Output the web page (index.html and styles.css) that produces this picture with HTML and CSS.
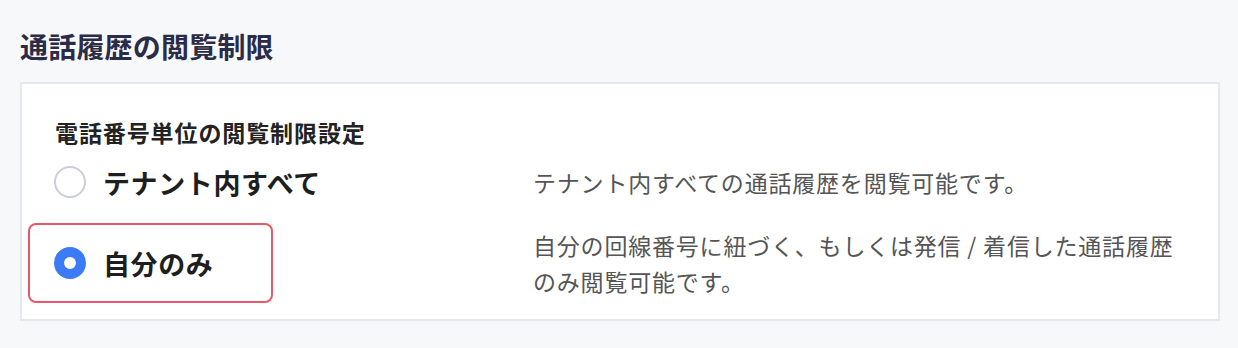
FILE: index.html
```html
<!DOCTYPE html>
<html lang="ja">
<head>
    <meta charset="UTF-8">
    <meta name="viewport" content="width=device-width, initial-scale=1.0">
    <title>通話履歴の閲覧制限</title>
    <link rel="stylesheet" href="styles.css">
</head>
<body>
    <div class="container">
        <h2 class="section-title">通話履歴の閲覧制限</h2>

        <div class="panel">
            <h3 class="panel-title">電話番号単位の閲覧制限設定</h3>

            <div class="options">
                <div class="option-row">
                    <label class="option">
                        <span class="radio"></span>
                        <span class="option-label">テナント内すべて</span>
                    </label>
                    <p class="option-desc">テナント内すべての通話履歴を閲覧可能です。</p>
                </div>
                <div class="option-row">
                    <label class="option selected">
                        <span class="radio checked"></span>
                        <span class="option-label">自分のみ</span>
                    </label>
                    <p class="option-desc">自分の回線番号に紐づく、もしくは発信 / 着信した通話履歴のみ閲覧可能です。</p>
                </div>
            </div>
        </div>
    </div>
</body>
</html>
```

FILE: styles.css
```css
body {
    margin: 0;
    padding: 0;
    background-color: #f7f8fa;
    font-family: "Noto Sans CJK JP", "Noto Sans", sans-serif;
}

.container {
    padding: 0 18px 0 20px;
}

.section-title {
    margin: 0;
    padding-top: 28px;
    height: 54px;
    font-size: 28px;
    line-height: 36px;
    letter-spacing: 0.2px;
    font-weight: 700;
    color: #2b2c47;
}

.panel {
    background-color: #fff;
    border: 2px solid #e6e8ec;
    padding: 38px 6px 16px;
}

.panel-title {
    margin: 0 0 0 27px;
    font-size: 23px;
    line-height: 20px;
    letter-spacing: 0.9px;
    font-weight: 700;
    color: #222;
}

.options {
    display: flex;
    flex-direction: column;
    gap: 1px;
}

.option-row {
    display: flex;
    align-items: center;
    height: 80px;
}

.option {
    box-sizing: border-box;
    flex: 0 0 245px;
    min-width: 0;
    height: 80px;
    display: flex;
    align-items: center;
    gap: 17px;
    padding-left: 24px;
    border: 2px solid transparent;
    border-radius: 8px;
    cursor: pointer;
}

.option.selected {
    border-color: #e75969;
}

.radio {
    box-sizing: border-box;
    flex: 0 0 32px;
    width: 32px;
    height: 32px;
    border: 2px solid #cbced8;
    border-radius: 50%;
    background-color: #fff;
}

.radio.checked {
    border: 10px solid #3b7bf6;
}

.option-label {
    font-size: 27px;
    letter-spacing: 0.6px;
    font-weight: 700;
    color: #1e1e1e;
    white-space: nowrap;
}

.option-desc {
    margin: 0 0 0 260px;
    width: 660px;
    font-size: 23px;
    line-height: 36px;
    letter-spacing: 0.8px;
    color: #555;
}
```
